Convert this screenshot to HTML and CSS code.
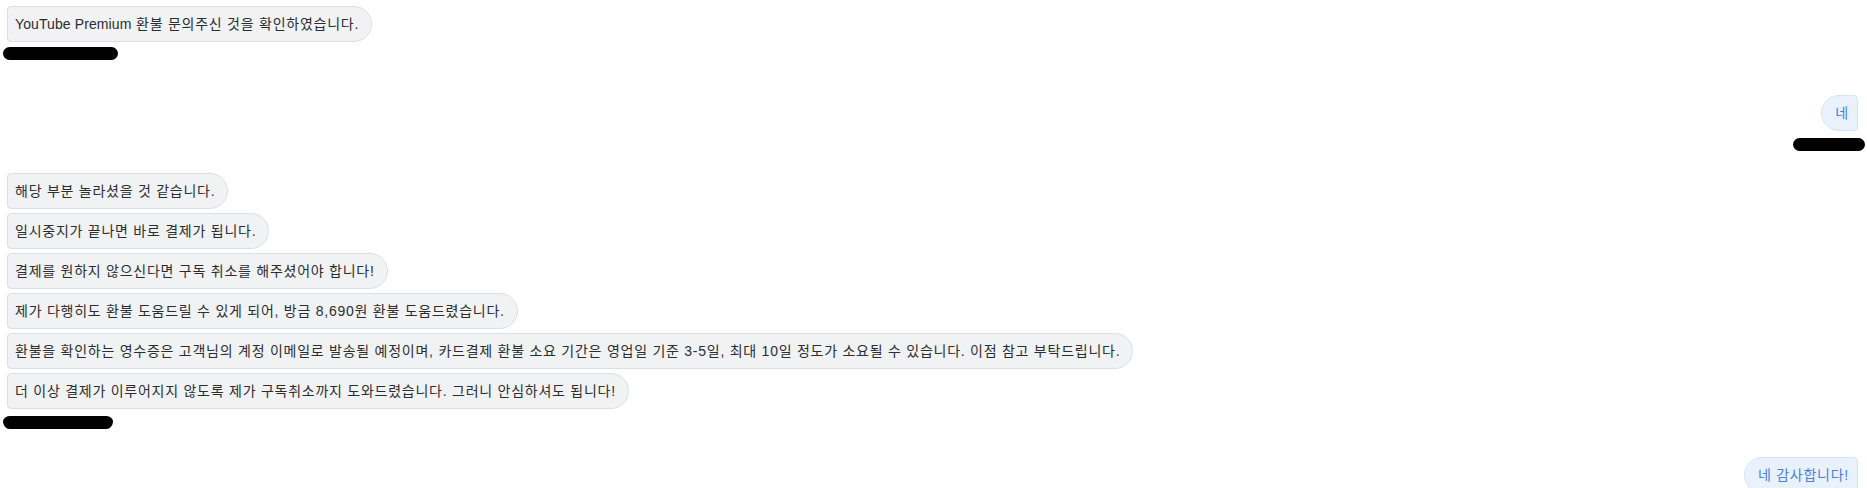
FILE: index.html
```html
<!DOCTYPE html>
<html lang="ko">
  <head>
    <meta charset="UTF-8" />
    <meta name="viewport" content="width=device-width, initial-scale=1.0" />
    <title>메시지</title>
    <link rel="stylesheet" href="styles.css">
  </head>
  <body>
    <div id="chat">
      <div class="group left first">
        <div class="bubble"><span class="en">YouTube Premium</span> 환불 문의주신 것을 확인하였습니다.</div>
        <div class="redact redact-a"></div>
      </div>

      <div class="group right second">
        <div class="bubble">네</div>
        <div class="redact redact-b"></div>
      </div>

      <div class="group left third">
        <div class="bubble">해당 부분 놀라셨을 것 같습니다.</div>
        <div class="bubble">일시중지가 끝나면 바로 결제가 됩니다.</div>
        <div class="bubble">결제를 원하지 않으신다면 구독 취소를 해주셨어야 합니다!</div>
        <div class="bubble">제가 다행히도 환불 도움드릴 수 있게 되어, 방금 8,690원 환불 도움드렸습니다.</div>
        <div class="bubble">환불을 확인하는 영수증은 고객님의 계정 이메일로 발송될 예정이며, 카드결제 환불 소요 기간은 영업일 기준 3-5일, 최대 10일 정도가 소요될 수 있습니다. 이점 참고 부탁드립니다.</div>
        <div class="bubble">더 이상 결제가 이루어지지 않도록 제가 구독취소까지 도와드렸습니다. 그러니 안심하셔도 됩니다!</div>
        <div class="redact redact-c"></div>
      </div>

      <div class="group right fourth">
        <div class="bubble">네 감사합니다!</div>
      </div>
    </div>
  </body>
</html>
```

FILE: styles.css
```css
* {
  box-sizing: border-box;
  margin: 0;
  padding: 0;
}
body {
  background: #fff;
  font-family: "Liberation Sans", Arial, "Noto Sans CJK KR", sans-serif;
  font-size: 14px;
  letter-spacing: 0.75px;
  color: #2b2d31;
  overflow: hidden;
}
#chat {
  display: flex;
  flex-direction: column;
  padding: 6px 9px 0 7px;
}
.group {
  display: flex;
  flex-direction: column;
  gap: 4px;
}
.group.left {
  align-items: flex-start;
}
.group.right {
  align-items: flex-end;
}
.second {
  margin-top: 35px;
}
.third {
  margin-top: 22px;
}
.fourth {
  margin-top: 28px;
}
.bubble {
  line-height: 18px;
  padding: 8px 12px 8px 7px;
  border: 1px solid #dcdee3;
  border-radius: 4px 18px 18px 4px;
  background-color: #f1f2f4;
  white-space: nowrap;
}
.bubble .en {
  font-size: 14px;
  letter-spacing: 0.1px;
}
.right .bubble {
  padding: 8px 8px 8px 13px;
  border-color: #d6e4fb;
  border-radius: 18px 4px 4px 18px;
  background-color: #e9f1fd;
  color: #4a7fdc;
}
.redact {
  background: #000;
  height: 13px;
  border-radius: 7px;
}
.redact-a {
  width: 115px;
  margin: 1px 0 0 -4px;
}
.redact-b {
  width: 72px;
  margin: 3px -7px 0 0;
}
.redact-c {
  width: 110px;
  margin: 3px 0 0 -4px;
  border-radius: 7px 7px 7px 7px / 6px 6px 8px 8px;
}
```
